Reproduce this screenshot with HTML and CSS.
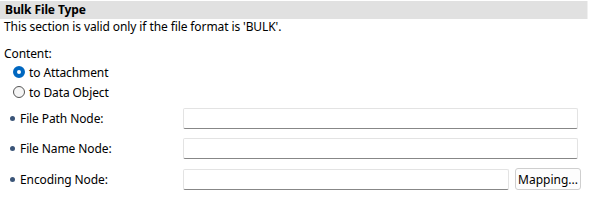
FILE: index.html
```html
<!DOCTYPE html>
<html lang="en">
<head>
    <meta charset="UTF-8">
    <title>Bulk File Type</title>
    <link rel="stylesheet" href="styles.css">
</head>
<body>

<div class="header">Bulk File Type</div>
<p class="desc">This section is valid only if the file format is 'BULK'.</p>

<p class="label">Content:</p>
<div class="radios">
    <label class="radio"><span class="dot checked"></span>to Attachment</label>
    <label class="radio"><span class="dot"></span>to Data Object</label>
</div>

<!-- Campos -->
<div class="fields">
    <div class="row">
        <span class="name"><span class="bullet"></span>File Path Node:</span>
        <input class="field" type="text">
    </div>
    <div class="row">
        <span class="name"><span class="bullet"></span>File Name Node:</span>
        <input class="field" type="text">
    </div>
    <div class="row last">
        <span class="name"><span class="bullet"></span>Encoding Node:</span>
        <input class="field short" type="text">
        <button class="btn">Mapping...</button>
    </div>
</div>

</body>
</html>
```

FILE: styles.css
```css
/* General */
body {
    margin: 0;
    background-color: #fff;
    color: #000;
    font-family: "Noto Sans", "Open Sans", sans-serif;
    font-size: 12px;
    letter-spacing: -0.1px;
}
p {
    margin: 0;
}
.header {
    margin-top: 1px;
    width: 582px;
    height: 18px;
    line-height: 18px;
    padding-left: 5px;
    background-color: #e1e1e1;
    font-weight: bold;
    border-right: 1px solid #f0f0f0;
}
.desc {
    padding-left: 4px;
    height: 16px;
    line-height: 16px;
}
.label {
    margin-top: 11px;
    padding-left: 4px;
    height: 16px;
    line-height: 16px;
}
.radios {
    padding-top: 0;
    padding-left: 13px;
}
.radio {
    display: flex;
    align-items: center;
    height: 20px;
}
.dot {
    width: 10px;
    height: 10px;
    border: 1px solid #555;
    border-radius: 50%;
    margin-right: 4px;
    background-color: #f5f5f5;
}
.dot.checked {
    width: 4px;
    height: 4px;
    border: 4px solid #0067c0;
    background-color: #fff;
}
.fields {
    padding-top: 6px;
}
.row {
    display: flex;
    align-items: center;
    height: 21px;
    margin-bottom: 9px;
}
.row.last {
    margin-top: 3px;
    height: 22px;
}
.name {
    display: flex;
    align-items: center;
    width: 173px;
    padding-left: 10px;
}
.bullet {
    width: 5px;
    height: 5px;
    border-radius: 50%;
    background-color: #3b5578;
    margin-right: 5px;
}
.field {
    box-sizing: border-box;
    width: 395px;
    height: 21px;
    margin: 0;
    border: 1px solid #e3e3e3;
    border-bottom: 1px solid #878787;
    border-radius: 2px;
    background-color: #fff;
}
.field.short {
    width: 326px;
}
.btn {
    box-sizing: border-box;
    margin-left: 6px;
    width: 66px;
    height: 22px;
    padding: 0;
    border: 1px solid #cfcfcf;
    border-radius: 3px;
    background-color: #fdfdfd;
    font-family: "Noto Sans", "Open Sans", sans-serif;
    font-size: 12px;
    color: #000;
}
```
